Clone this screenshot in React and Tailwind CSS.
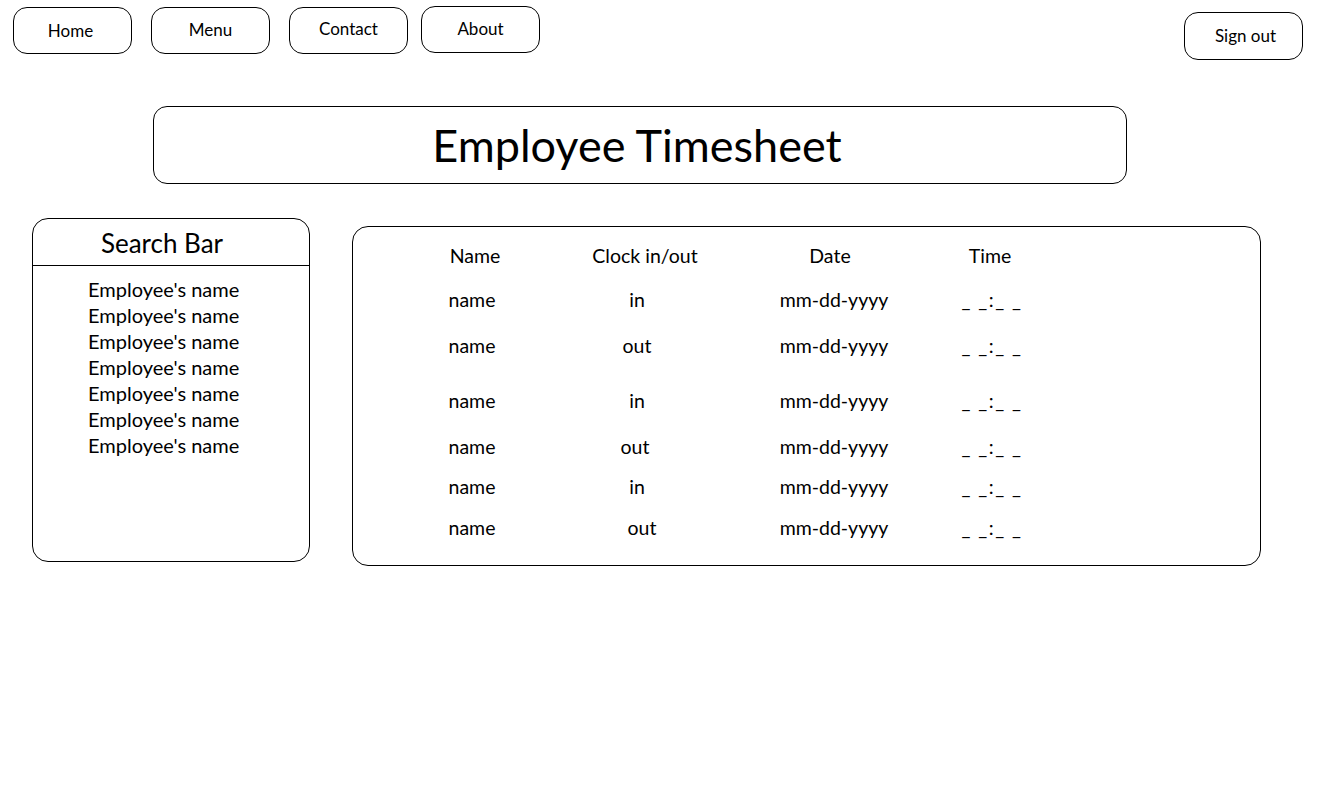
import React from "react";

const navItems = [
  { label: "Home", cls: "mt-[7px] pr-[4px]" },
  { label: "Menu", cls: "mt-[7px] pb-[2px]" },
  { label: "Contact", cls: "mt-[7px] pb-[4px]" },
  { label: "About", cls: "mt-[6px] pb-[2px]" },
];

const employees = Array.from({ length: 7 }, () => "Employee's name");

const rows = [
  { name: "name", clock: "in", h: "h-[46px]", off: "-ml-[16px]" },
  { name: "name", clock: "out", h: "h-[55px]", off: "-ml-[16px]" },
  { name: "name", clock: "in", h: "h-[46px]", off: "-ml-[16px]" },
  { name: "name", clock: "out", h: "h-[40px]", off: "-ml-[20px]" },
  { name: "name", clock: "in", h: "h-[41px]", off: "-ml-[16px]" },
  { name: "name", clock: "out", h: "h-[40px]", off: "-ml-[6px]" },
];

const App = () => {
  return (
    <div
      className="w-[1338px] h-[785px] bg-white text-black"
      style={{ fontFamily: "Lato, 'Open Sans', sans-serif" }}
    >
      {/* top nav */}
      <div className="flex justify-between pl-[13px] pr-[35px]">
        <div className="flex items-start">
          {navItems.map((item, idx) => (
            <button
              key={item.label}
              className={`w-[119px] h-[47px] border border-black rounded-[14px] text-[17px] flex items-center justify-center ${item.cls} ${
                idx === 0 ? "" : idx === 3 ? "ml-[13px]" : "ml-[19px]"
              }`}
            >
              {item.label}
            </button>
          ))}
        </div>
        <button className="mt-[12px] w-[119px] h-[48px] border border-black rounded-[14px] text-[17px] flex items-center justify-center pl-[4px]">
          Sign out
        </button>
      </div>

      {/* title */}
      <div className="ml-[153px] mt-[46px] w-[974px] h-[78px] border border-black rounded-[14px] flex items-center justify-center pr-[6px]">
        <h1 className="text-[45px] leading-none">Employee Timesheet</h1>
      </div>

      {/* content */}
      <div className="flex items-start mt-[34px]">
        <div className="ml-[32px] w-[278px] h-[344px] border border-black rounded-[16px]">
          <div className="h-[47px] border-b border-black -mx-[1px] flex items-center justify-center pt-[2px] pr-[18px]">
            <span className="text-[26px] leading-none">Search Bar</span>
          </div>
          <ul className="pt-[10px] pl-[55px] text-[20px] leading-[26px]">
            {employees.map((name, idx) => (
              <li key={idx}>{name}</li>
            ))}
          </ul>
        </div>

        <div className="ml-[42px] mt-[8px] w-[909px] h-[340px] border border-black rounded-[16px] text-[19.5px]">
          <div className="grid grid-cols-[200px_140px_230px_90px] pl-[22px] pt-[14px] h-[58px]">
            <div className="text-center">Name</div>
            <div className="text-center">Clock in/out</div>
            <div className="text-center">Date</div>
            <div className="text-center">Time</div>
          </div>
          {rows.map((row, idx) => (
            <div
              key={idx}
              className={`grid grid-cols-[200px_140px_230px_90px] pl-[22px] ${row.h}`}
            >
              <div className="text-center -ml-[6px]">{row.name}</div>
              <div className={`text-center ${row.off}`}>{row.clock}</div>
              <div className="text-center ml-[8px]">mm-dd-yyyy</div>
              <div className="text-center ml-[4px] tracking-[1.5px]">_ _:_ _</div>
            </div>
          ))}
        </div>
      </div>
    </div>
  );
};

export default App;
